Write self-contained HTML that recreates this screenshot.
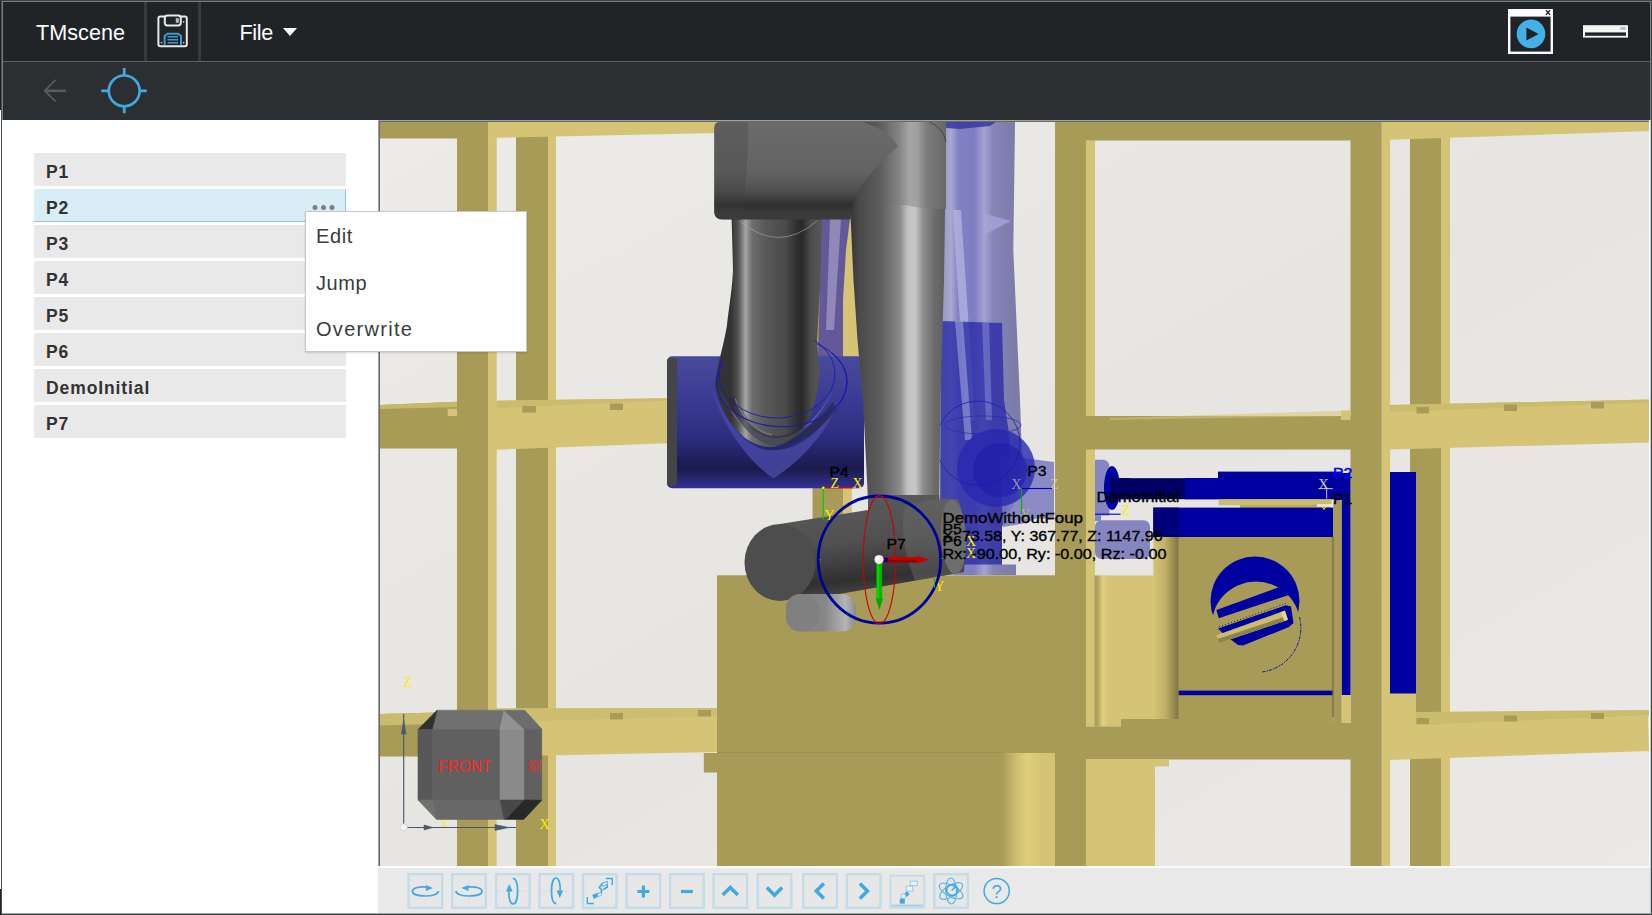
<!DOCTYPE html>
<html lang="en">
<head>
<meta charset="utf-8">
<title>TMscene</title>
<style>
html,body{margin:0;padding:0;}
body{width:1652px;height:915px;overflow:hidden;background:#fff;position:relative;font-family:"Liberation Sans","DejaVu Sans",sans-serif;}
.abs{position:absolute;}
#frameL{left:0;top:0;width:1px;height:915px;background:linear-gradient(#14202a 0,#14202a 110px,#fff 110px,#fff 889px,#1e2124 889px);}
#frameL1{left:1px;top:0;width:1px;height:915px;background:#4d5255;}
#frameL2{left:2px;top:1px;width:1px;height:119px;background:#7a7f80;}
#frameR{left:1649px;top:120px;width:2px;height:795px;background:linear-gradient(90deg,#fff 0,#fff 1px,#c9cbcc 1px);}
#frameR1{left:1651px;top:0;width:1px;height:915px;background:#3c4144;}
#frameR2{left:1650px;top:1px;width:1px;height:119px;background:#7a7f80;}
#frameB{left:1px;top:914px;width:1651px;height:1px;background:#3c4144;}
#hdr{left:3px;top:0;width:1647px;height:61px;background:#202427;}
#hdrTop0{left:0;top:0;width:1652px;height:1px;background:#3c4144;}
#hdrTop{left:2px;top:1px;width:1649px;height:1px;background:#7a7f80;}
#hdrSep{left:3px;top:61px;width:1647px;height:1px;background:#5b6062;}
#bar2{left:3px;top:62px;width:1647px;height:58px;background:#2b2f32;}
.vsep{top:2px;width:3px;height:59px;background:#363b3e;}
#title{left:36px;top:18.6px;color:#fff;font-size:21.6px;line-height:28px;letter-spacing:0.05px;}
#file{left:239.4px;top:18.6px;color:#fff;font-size:21.6px;line-height:28px;letter-spacing:-0.3px;}
#caret{left:282.6px;top:28px;width:0;height:0;border-left:7.6px solid transparent;border-right:7.6px solid transparent;border-top:8.2px solid #fff;}
#panel{left:2px;top:120px;width:376px;height:794px;background:#fff;}
.row{left:34px;width:312px;height:33px;background:#e9e9e9;color:#333;font-weight:bold;font-size:17.5px;line-height:39px;box-sizing:border-box;padding-left:12px;letter-spacing:0.9px;overflow:hidden;}
.row.sel{background:#d9edf7;border-bottom:1px solid #8fc5ea;border-right:1px solid #8fc5ea;}
#popup{left:305px;top:211px;width:222px;height:141px;background:#fff;border:1px solid #c8c8c8;box-sizing:border-box;box-shadow:0 1px 2px rgba(0,0,0,.15);}
.mi{left:10px;color:#373c3f;font-size:20px;line-height:26px;letter-spacing:0.6px;white-space:nowrap;}
#view{left:378px;top:120px;width:1271px;height:746px;}
#tb{left:378px;top:866px;width:1272px;height:48px;background:#e9e9e9;}
</style>
</head>
<body>
<div class="abs" id="panel"></div>
<div class="abs" id="frameL"></div><div class="abs" id="frameL1"></div><div class="abs" id="frameL2"></div>
<div class="abs" id="frameR"></div><div class="abs" id="frameR1"></div><div class="abs" id="frameR2"></div>
<div class="abs" id="frameB"></div>
<div class="abs" id="hdr"></div>
<div class="abs" id="hdrTop0"></div><div class="abs" id="hdrTop"></div>
<div class="abs" id="hdrSep"></div>
<div class="abs" id="bar2"></div>
<div class="abs vsep" style="left:144px"></div>
<div class="abs vsep" style="left:198px"></div>
<div class="abs" id="title">TMscene</div>
<div class="abs" id="file">File</div>
<div class="abs" id="caret"></div>


<!-- header icons -->
<svg class="abs" style="left:150px;top:8px" width="46" height="46" viewBox="150 8 46 46">
 <rect x="158.4" y="16.6" width="28.4" height="29.6" rx="2" fill="none" stroke="#e8e8e8" stroke-width="2"/>
 <rect x="164.8" y="15.6" width="16" height="9.8" rx="2.6" fill="#202427" stroke="#e8e8e8" stroke-width="2"/>
 <rect x="175.8" y="18.2" width="3" height="4.6" fill="#bdbdbd"/>
 <path d="M164.6 45 V36 L167.6 33.8 H178 L181 36 V45" fill="none" stroke="#3a9bd1" stroke-width="2"/>
 <path d="M167.6 36.8 H178 M167.6 39.8 H178 M167.6 42.8 H178" stroke="#3a9bd1" stroke-width="1.4"/>
 <circle cx="183.6" cy="21.8" r="0.9" fill="#ccc"/><circle cx="161.5" cy="42.6" r="0.9" fill="#bbb"/><circle cx="183.6" cy="42.6" r="0.9" fill="#bbb"/>
</svg>
<svg class="abs" style="left:30px;top:62px" width="130" height="58" viewBox="30 62 130 58">
 <path d="M65.8 90.8 H45.5" stroke="#585c5e" stroke-width="2.6" fill="none"/>
 <path d="M55.6 79.8 L44.6 90.8 L55.6 101.4" stroke="#585c5e" stroke-width="1.7" fill="none"/>
 <circle cx="124.2" cy="90.9" r="15.4" fill="none" stroke="#3fa9e0" stroke-width="2.7"/>
 <path d="M124.2 68 V76 M124.2 105.8 V113.2 M101.2 90.9 H109.2 M139.2 90.9 H146.8" stroke="#3fa9e0" stroke-width="2.8" fill="none"/>
</svg>
<svg class="abs" style="left:1500px;top:4px" width="140" height="56" viewBox="1500 4 140 56">
 <rect x="1508" y="9" width="45" height="45" fill="#fbfbfb"/>
 <rect x="1510.4" y="16.6" width="40.2" height="35" fill="#202427"/>
 <path d="M1546 10.3 L1550 14.7 M1550 10.3 L1546 14.7" stroke="#202427" stroke-width="1.3"/>
 <circle cx="1531" cy="33.9" r="14.3" fill="#45b0e5"/>
 <path d="M1526.4 27.4 L1538.6 34 L1526.4 40.4 Z" fill="#202427"/>
 <rect x="1583" y="25.2" width="45" height="12.4" fill="#f4f4f4"/>
 <rect x="1585" y="32.4" width="41" height="3.4" fill="#202427"/>
 <rect x="1620.4" y="27" width="5" height="2.8" fill="#bbb"/>
</svg>


<!-- SCENE -->
<svg class="abs" id="view" viewBox="378 120 1271 746">
<defs>
<linearGradient id="bgG" x1="0" y1="0" x2="1" y2="1"><stop offset="0" stop-color="#ecebe8"/><stop offset="0.5" stop-color="#e7e5e2"/><stop offset="1" stop-color="#ebe9e7"/></linearGradient>
<linearGradient id="cylG" x1="0" y1="0" x2="1" y2="0"><stop offset="0" stop-color="#d5c475"/><stop offset="0.45" stop-color="#c2b268"/><stop offset="1" stop-color="#7f7440"/></linearGradient>
<linearGradient id="pedR" x1="0" y1="0" x2="1" y2="0"><stop offset="0" stop-color="#a89b58"/><stop offset="0.08" stop-color="#ab9e5a"/><stop offset="0.3" stop-color="#cdbd70"/><stop offset="0.5" stop-color="#dfcf7c"/><stop offset="0.75" stop-color="#d5c475"/><stop offset="1" stop-color="#d5c475"/></linearGradient>
<linearGradient id="colH" x1="0" y1="0" x2="1" y2="0"><stop offset="0" stop-color="#a89b58"/><stop offset="0.25" stop-color="#b2a560"/><stop offset="0.62" stop-color="#e0d080"/><stop offset="1" stop-color="#d5c475"/></linearGradient>
<mask id="capM"><rect x="1200" y="540" width="120" height="150" fill="#fff"/><circle cx="1256" cy="626" r="44.5" fill="#000"/></mask>
<linearGradient id="gArm" gradientUnits="userSpaceOnUse" x1="944" y1="0" x2="1016" y2="0"><stop offset="0" stop-color="#9c9cc4"/><stop offset="0.1" stop-color="#a8a8d0"/><stop offset="0.2" stop-color="#8080c4"/><stop offset="0.42" stop-color="#7e7ec2"/><stop offset="0.56" stop-color="#a4a4d4"/><stop offset="0.68" stop-color="#8484b6"/><stop offset="1" stop-color="#7c7ca8"/></linearGradient>
<linearGradient id="gCyl" x1="0" y1="0" x2="0" y2="1"><stop offset="0" stop-color="#4a4a9c"/><stop offset="0.3" stop-color="#3c3c94"/><stop offset="0.62" stop-color="#2c2c80"/><stop offset="0.85" stop-color="#1a1a4c"/><stop offset="0.95" stop-color="#2a2a7a"/><stop offset="1" stop-color="#3030a0"/></linearGradient>
<linearGradient id="gBlk" gradientUnits="userSpaceOnUse" x1="0" y1="122" x2="0" y2="220"><stop offset="0" stop-color="#6b6b6b"/><stop offset="0.5" stop-color="#636363"/><stop offset="0.7" stop-color="#505050"/><stop offset="0.85" stop-color="#2f2f2f"/><stop offset="0.93" stop-color="#3c3c3c"/><stop offset="1" stop-color="#3a3a3a"/></linearGradient>
<linearGradient id="gV" gradientUnits="userSpaceOnUse" x1="850" y1="0" x2="946" y2="0"><stop offset="0" stop-color="#343434"/><stop offset="0.1" stop-color="#4a4a4a"/><stop offset="0.32" stop-color="#5e5e5e"/><stop offset="0.52" stop-color="#8a8a8a"/><stop offset="0.6" stop-color="#c0c0c0"/><stop offset="0.68" stop-color="#c8c8c8"/><stop offset="0.76" stop-color="#8e8e8e"/><stop offset="0.88" stop-color="#6c6c6c"/><stop offset="1" stop-color="#5c5c5c"/></linearGradient>
<linearGradient id="gVtop" gradientUnits="userSpaceOnUse" x1="850" y1="0" x2="946" y2="0"><stop offset="0" stop-color="#343434"/><stop offset="0.1" stop-color="#4a4a4a"/><stop offset="0.32" stop-color="#5e5e5e"/><stop offset="0.52" stop-color="#868686"/><stop offset="0.62" stop-color="#a6a6a6"/><stop offset="0.7" stop-color="#a0a0a0"/><stop offset="0.8" stop-color="#7c7c7c"/><stop offset="1" stop-color="#686868"/></linearGradient>
<linearGradient id="gL" gradientUnits="userSpaceOnUse" x1="731" y1="0" x2="822" y2="0"><stop offset="0" stop-color="#333"/><stop offset="0.08" stop-color="#545454"/><stop offset="0.16" stop-color="#a4a4a4"/><stop offset="0.23" stop-color="#6e6e6e"/><stop offset="0.38" stop-color="#585858"/><stop offset="0.6" stop-color="#4a4a4a"/><stop offset="0.72" stop-color="#303030"/><stop offset="0.78" stop-color="#282828"/><stop offset="0.88" stop-color="#4c4c4c"/><stop offset="1" stop-color="#585858"/></linearGradient>
<linearGradient id="gW" x1="0" y1="0" x2="0.18" y2="1"><stop offset="0" stop-color="#5c5c5c"/><stop offset="0.5" stop-color="#505050"/><stop offset="0.85" stop-color="#303030"/><stop offset="1" stop-color="#484848"/></linearGradient>
<linearGradient id="gS" x1="0" y1="0" x2="1" y2="0"><stop offset="0" stop-color="#808080"/><stop offset="0.55" stop-color="#868686"/><stop offset="0.85" stop-color="#b4b4b4"/><stop offset="1" stop-color="#8a8a8a"/></linearGradient>
<!--DEFS-->
</defs>
<rect x="378" y="120" width="1272" height="746" fill="url(#bgG)"/>
<g id="frameBack">
<!-- far posts -->
<rect x="516" y="122" width="32" height="744" fill="#a89b58"/><rect x="548" y="122" width="8" height="744" fill="#d5c475"/>
<rect x="1410" y="122" width="31.5" height="744" fill="#a89b58"/><rect x="1441.5" y="122" width="8.5" height="744" fill="#d5c475"/>
<rect x="812.5" y="122" width="30.5" height="454" fill="#a89b58"/><rect x="843" y="122" width="8.8" height="454" fill="#d5c475"/>
<rect x="843" y="225" width="20" height="132" fill="#d5c475"/>
<!-- top light beams -->
<polygon points="488,122 840,122 840,130.5 488,138" fill="#d5c475"/>
<polygon points="1382,122 1649,122 1649,131 1382,140" fill="#d5c475"/>
<!-- mid light beam left -->
<polygon points="496,400.7 668,398.3 668,443.2 496,449.8" fill="#d5c475"/>
<polygon points="496,400.7 668,398.3 668,400.6 496,408" fill="#cbbb6c"/>
<rect x="522.3" y="406" width="13.7" height="6.6" fill="#a89b58"/><rect x="610" y="403.5" width="13" height="6.5" fill="#a89b58"/>
<!-- mid light beam right -->
<polygon points="1390,405 1649,399.5 1649,442.5 1390,449.5" fill="#d5c475"/>
<polygon points="1390,405 1649,399.5 1649,402.5 1390,412" fill="#cbbb6c"/>
<rect x="1416.5" y="407" width="12.5" height="6.5" fill="#a89b58"/><rect x="1504" y="404.5" width="13" height="6.5" fill="#a89b58"/><rect x="1591" y="402" width="13" height="6.5" fill="#a89b58"/>
<!-- lower light beam left -->
<polygon points="496,708.5 717,708 717,752 496,756.5" fill="#d5c475"/>
<polygon points="496,708.5 717,708 717,716 496,722" fill="#cdbd70"/>
<rect x="610" y="713" width="13" height="6.5" fill="#a89b58"/><rect x="698" y="710" width="13" height="6.5" fill="#a89b58"/>
<!-- lower light beam right -->
<polygon points="1390,726 1648,715.6 1649,751 1390,760" fill="#d5c475"/><polygon points="1416,712 1649,710 1649,715.6 1416,725.2" fill="#cbbb6c"/>
<rect x="1416.5" y="718" width="12.5" height="6" fill="#a89b58"/><rect x="1504" y="715.5" width="13" height="6" fill="#a89b58"/><rect x="1591" y="713" width="13" height="6" fill="#a89b58"/>
<!-- left dark beams -->
<polygon points="380,122 488,122 488,138.4 380,138.4" fill="#a89b58"/>
<polygon points="380,405 457,401.8 457,448.6 380,448.6" fill="#a89b58"/>
<polygon points="380,405 457,401.8 457,407 380,409" fill="#c6b76a"/>
<rect x="447.7" y="408.8" width="9.3" height="7.2" fill="#d5c475"/>
<polygon points="380,714 457,712 457,756.5 380,756.5" fill="#a89b58"/>
<polygon points="380,714 457,712 457,723.5 380,725.5" fill="#cbbb6e"/>
<!-- front posts -->
<rect x="457" y="122" width="31" height="744" fill="#a89b58"/><rect x="488" y="138" width="8.7" height="728" fill="#d5c475"/>
<rect x="1055" y="122" width="31" height="744" fill="#a89b58"/><rect x="1086" y="140.5" width="9" height="440" fill="#d5c475"/>
<rect x="1350.5" y="122" width="31.3" height="744" fill="#a89b58"/><rect x="1381.8" y="122" width="8.3" height="744" fill="#d5c475"/>
<!-- right dark beams -->
<rect x="1086" y="122" width="265" height="18.5" fill="#a89b58"/>
<rect x="1086" y="416" width="265" height="33.5" fill="#a89b58"/>
<polygon points="1110,418 1350.5,410.5 1350.5,416 1110,420" fill="#d5c475" opacity="0.55"/>
<rect x="1341" y="410.5" width="9.5" height="9.5" fill="#d5c475"/>
</g>
<g id="ghost">
<!-- ghost upper arm -->
<polygon points="940,122 1015,122 1013.3,250 1020,400 1022,458 1016,500 1002,527 1002,564.4 1016,564.4 1016,575 940,575" fill="url(#gArm)"/>
<polygon points="943,122 996,122 990,126 960,129 946,128" fill="#3c3ca4" opacity="0.9"/><polygon points="953,210 961,210 975,420 966,420" fill="#b4b4e2" opacity="0.75"/>
<polygon points="983,213 1011,221 984,235" fill="#a4a4dc" opacity="0.8"/>
<polygon points="941,321 1002,323 1004,400 1010,440 1010,500 1002,527 1002,564.4 940,564.4" fill="#2c2ca8" opacity="0.8"/>
<polygon points="955,321 963,321 972,440 965,440" fill="#a0a0dc" opacity="0.6"/><polygon points="982,321 989,321 992,420 986,420" fill="#8c8cd4" opacity="0.5"/>
<!-- ghost thin arm between gray arms -->
<polygon points="822,219 850,219 846,250 843,300 843,357 818,357" fill="#64589a"/>
<polygon points="830,219 841,219 834,330 826,330" fill="#9088b8"/>
<!-- P3 blob -->
<polygon points="1000,455 1054,462 1054,518.5 1036,518.5 1026,523 1003,527" fill="#7a7ac0" opacity="0.85"/>
<circle cx="996" cy="468" r="39" fill="#2828b0" opacity="0.8"/>
<circle cx="978" cy="443" r="42" fill="none" stroke="#1c1cb0" stroke-width="0.8"/>
<circle cx="1000" cy="470" r="27" fill="#1818a8" opacity="0.5"/>
<ellipse cx="983" cy="425" rx="38" ry="9" fill="none" stroke="#2a2ab0" stroke-width="0.7"/>
<!-- ghost pieces right of post -->
<rect x="1095" y="520.2" width="55" height="38.8" rx="6.5" fill="#8585c0"/>
<path d="M1095,459.8 H1104 Q1109.5,461 1109.5,467 V515.6 H1095 Z" fill="#8686c0"/><rect x="1095" y="515" width="6" height="6" fill="#8686c0"/>
<!-- ghost shoulder cylinder -->
<rect x="667" y="356.3" width="197" height="132" rx="5" fill="url(#gCyl)"/>
<rect x="667" y="358" width="10" height="128" rx="4" fill="#454548"/>
</g>
<g id="rightObjs">
<!-- blue back panels -->
<rect x="1390" y="472" width="26" height="222" fill="#0000a0"/>
<rect x="1390" y="693.5" width="26" height="34" fill="#d5c475"/>
<rect x="1341.5" y="473" width="9" height="222" fill="#0000a0"/>
<rect x="1341.5" y="695" width="9" height="31" fill="#d5c475"/>
<!-- fork bar -->
<rect x="1110" y="478.2" width="76" height="21" fill="#000064"/>
<rect x="1185" y="478" width="157" height="21.4" fill="#0000a0"/>
<rect x="1218" y="471.6" width="124" height="7" fill="#0000a0"/>
<ellipse cx="1112" cy="488" rx="8" ry="22" fill="#0000a0"/>
<rect x="1110" y="478.2" width="20" height="21" fill="#000064"/>
<rect x="1218.5" y="499.4" width="113" height="6" fill="#cdbc6c"/>
<rect x="1240" y="505" width="91" height="3" fill="#b9aa60"/>
<!-- light pedestal side -->
<rect x="1094.6" y="575.5" width="60" height="151" fill="#d5c475"/>
<rect x="1086" y="575.5" width="9" height="151" fill="#d5c475"/>
<rect x="1094.6" y="575.5" width="13.4" height="151" fill="url(#colH)"/>
<!-- foup box -->
<rect x="1153.3" y="507.6" width="180" height="30" fill="#0000a0"/>
<rect x="1153.3" y="507.6" width="25.5" height="30" fill="#00007a"/>
<rect x="1178.7" y="537" width="154.8" height="187" fill="#a89b58"/>
<rect x="1153.3" y="537" width="25.5" height="182" fill="url(#cylG)"/>
<rect x="1178.7" y="690.6" width="154.8" height="4.6" fill="#0000a0"/>
<rect x="1333.3" y="501" width="8.3" height="226" fill="#a89b58"/>
<rect x="1332.3" y="537" width="1.4" height="180" fill="#7a7040"/>
<!-- logo -->
<circle cx="1255" cy="601" r="44.5" fill="#0000a0" mask="url(#capM)"/>
<path d="M1299.5,617 A44.5,44.5 0 0 1 1262,672" fill="none" stroke="#0000a0" stroke-width="0.9" stroke-dasharray="3 0.8 1.5 1.2"/>
<polygon points="1216.4,610 1281.5,586.3 1289,584 1289.5,594.7 1218.7,618.2" fill="#0000a0"/>
<polygon points="1218,628.4 1286,605.2 1291,606.5 1293.5,623 1289,627 1243,645.5 1238,645 1224,634.5" fill="#0000a0"/>
<polygon points="1216.4,635.3 1282.2,611.6 1287.6,620 1219.5,643" fill="#cdbc6c"/>
<polygon points="1217.6,639 1285.6,616.4 1287.6,620 1219.5,643" fill="#8f8448"/>
<polygon points="1281,612 1285,610.6 1288,619.6 1284.2,621" fill="#e6d88a"/>
<path d="M1219,627 L1286,603.5" stroke="#0000a0" stroke-width="0.9" stroke-dasharray="1 2.2" fill="none"/>
<!-- dark beam bottom right portion -->
<rect x="1086" y="726.5" width="265" height="33" fill="#a89b58"/>
<polygon points="1121,719 1265,719 1265,723 1351,723 1351,727 1121,727" fill="#a89b58"/>
<rect x="1086" y="759.5" width="69" height="107" fill="#d5c475"/>
<rect x="1155" y="759.5" width="14" height="7" fill="#d5c475"/>
</g>
<g id="pedestal">
<rect x="717" y="575.3" width="338" height="291" fill="#a89b58"/>
<rect x="703.8" y="753" width="14" height="19.5" fill="#a89b58"/>
<rect x="717" y="752" width="285" height="1" fill="#9a8e50"/>
<rect x="999" y="753" width="56" height="113" fill="url(#pedR)"/>
</g>
<g id="robot">
<ellipse cx="782" cy="381.7" rx="65" ry="45" fill="none" stroke="#1a1ab4" stroke-width="1"/>
<!-- lower-left arm -->
<path d="M731.5,215 L822.4,215 L820.6,280 L817,340 L819.5,372 C817,420 795,447 770,447 C745,447 722,420 715,385 C718,360 724,345 727,325 C730,300 732,290 733,270 Z" fill="url(#gL)"/>
<!-- ghost collar over arm -->
<path d="M708,377 C722,430 750,462 773.5,478.5 C800,462 830,430 841,396 C820,440 790,452 768,450 C745,447 722,420 708,377 Z" fill="#4a4aa8" opacity="0.8"/>
<path d="M714,380 C730,418 752,440 775,446 C800,440 822,415 832,392 C812,428 790,440 772,438 C748,434 728,412 714,380 Z" fill="#8e8ec8" opacity="0.45"/>
<path d="M728,400 C740,430 760,445 778,446 C800,445 822,428 837,410 L833,402 C820,420 800,434 778,436 C760,435 745,420 735,396 Z" fill="#26262e" opacity="0.5"/>
<path d="M735,398 C742,418 756,432 772,435" fill="none" stroke="#b4b4d0" stroke-width="1.6" opacity="0.4"/>
<path d="M723.1,362.7 A65,45 0 1 0 831.8,352.8" fill="none" stroke="#1a1ab4" stroke-width="1.1"/>
<path d="M722.5,359.0 A58,44 0 1 0 814.3,340.3" fill="none" stroke="#1a1ab4" stroke-width="0.9"/>
<!-- vertical arm -->
<path d="M850,122 L946,122 L946,146 L944,280 L940.5,400 L939.3,500 L868,500 L863,401 L857.5,340 L853.5,280 L850.5,215 Z" fill="url(#gV)"/>
<path d="M850,122 L946,122 L946,209 L927,208.8 L904,205 L850,205 Z" fill="url(#gVtop)"/>
<path d="M929.4,122 Q944,128 946,142" fill="none" stroke="#3a3a3a" stroke-width="0.8"/>
<!-- upper block -->
<path d="M719,122 L862.7,122 Q888,130 898,146.3 Q872,168 858.4,191 Q851,205 850.5,219.6 L722,219.6 Q714.2,219 714.2,212 L714.2,129 Q714.2,122 719,122 Z" fill="url(#gBlk)"/>
<path d="M719,122 L748,122 Q749,170 741,219.6 L722,219.6 Q714.2,219 714.2,212 L714.2,129 Q714.2,122 719,122 Z" fill="#3c3c3c" opacity="0.28"/>
<path d="M740,221 Q778,254 817,221" fill="none" stroke="#b0b0b0" stroke-width="0.7" opacity="0.8"/>
<!-- wrist -->
<path d="M868,495 L939.3,495 L939.3,500 L958,499.5 Q967,520 964,572 L800,600.9 L780,524 L868,510 Z" fill="url(#gW)"/>
<path d="M905,504 L939.3,498 L958,499.5 Q967,520 964,572 L915,580.5 Q898,540 905,504 Z" fill="#6a6a6a" opacity="0.45"/>
<ellipse cx="953.5" cy="537" rx="12.5" ry="37.5" fill="#6e6e6e" transform="rotate(-3 953.5 537)"/>
<path d="M868,496 Q880,520 905,508 Q925,500 939,497 L939,500 L868,500 Z" fill="#555" opacity="0.5"/>
<ellipse cx="780" cy="562.5" rx="35.5" ry="38.5" fill="#4d4d4d"/>
<!-- small cylinder -->
<rect x="786" y="594" width="70" height="37.5" rx="14" fill="url(#gS)"/>
<ellipse cx="803" cy="612.7" rx="17" ry="18.7" fill="#808080"/>
</g>
<g id="overlay" font-family="'Liberation Sans','DejaVu Sans',sans-serif">
<!-- P4 axes -->
<path d="M823.3,487.7 H853.8" stroke="#e00000" stroke-width="1.2"/>
<path d="M823.3,487.7 V519.2" stroke="#00d000" stroke-width="1.2"/>
<circle cx="823.3" cy="487.7" r="1.3" fill="#ffff00"/>
<g font-family="'Liberation Serif','DejaVu Serif',serif" font-size="14" fill="#ffee00">
<text x="830.5" y="487.5">Z</text><text x="852.5" y="487.5">X</text><text x="824.5" y="519.5">Y</text>
<text x="1121.5" y="515">Z</text>
<text x="966" y="546">X</text><text x="966" y="557.5">X</text>
<text x="934.5" y="590.5">Y</text>
<text x="403.5" y="687">Z</text><text x="539.5" y="828.5">X</text><text x="440" y="826.5" font-size="12">Y</text>
</g>
<g font-family="'Liberation Serif','DejaVu Serif',serif" font-size="14" fill="#b0a8c8" opacity="0.85">
<text x="1011.5" y="489">X</text><text x="1050" y="489" fill="#d8d090">Z</text><text x="1020.5" y="518.5" fill="#c8c060">Y</text>
</g>
<!-- P3 axes -->
<path d="M1021.5,488.5 H1052" stroke="#0000c8" stroke-width="1.1"/>
<path d="M1021.5,488.5 V514" stroke="#00b000" stroke-width="1.1"/>
<path d="M1095,514.2 H1120.5" stroke="#0000c8" stroke-width="1.1"/>
<!-- gizmo -->
<ellipse cx="879.4" cy="559.6" rx="61.2" ry="63.6" fill="none" stroke="#00009a" stroke-width="2.8"/>
<ellipse cx="879.4" cy="559.6" rx="16.2" ry="64" fill="none" stroke="#cc0000" stroke-width="1.1"/>
<rect x="883" y="557" width="36" height="5.4" fill="#c80000"/>
<rect x="883" y="559.8" width="36" height="2.6" fill="#900000"/>
<polygon points="917.5,556 929.5,559.7 917.5,563.6" fill="#c80000"/>
<rect x="884" y="557.8" width="4" height="4" fill="#0000a0"/>
<rect x="876.7" y="563" width="5.4" height="37" fill="#00b400"/>
<rect x="876.7" y="563" width="2.4" height="37" fill="#00d800"/>
<polygon points="875.8,598.5 883,598.5 879.4,610" fill="#00a800"/>
<circle cx="879" cy="559.5" r="4.6" fill="#e8e8e8"/>
<circle cx="877.8" cy="558.3" r="2.2" fill="#ffffff"/>
<path d="M941,558.5 h3 M819.5,559.8 h2" stroke="#00c000" stroke-width="1"/>
<path d="M934.5,578 V588" stroke="#00c000" stroke-width="1"/>
<!-- labels -->
<g font-size="14.4" fill="#000" stroke="#000" stroke-width="0.35">
<text transform="translate(829.5,477) scale(1.095,1)">P4</text>
<text transform="translate(886.5,548.7) scale(1.095,1)">P7</text>
<text transform="translate(1027.3,476.2) scale(1.095,1)">P3</text>
<text transform="translate(1096.5,502.4) scale(1.152,1)">DemoInitial</text>
<text transform="translate(942.5,523.3) scale(1.171,1)">DemoWithoutFoup</text>
<text transform="translate(942.5,533.5) scale(1.095,1)">P5</text>
<text transform="translate(942.5,546) scale(1.095,1)">P6</text>
<text transform="translate(942.5,541.4) scale(1.112,1)">X: 73.58, Y: 367.77, Z: 1147.96</text>
<text transform="translate(942.5,559.3) scale(1.125,1)">Rx: -90.00, Ry: -0.00, Rz: -0.00</text>
<text transform="translate(1333,503.5) scale(1.095,1)">P1</text>
</g>
<text transform="translate(1333,477.8) scale(1.095,1)" font-size="14.4" fill="#0000ff" stroke="#0000ff" stroke-width="0.5">P2</text>
<g font-family="'Liberation Serif','DejaVu Serif',serif" font-size="14.5" fill="#d0d0d0"><text x="1318.3" y="489.4">X</text></g>
<path d="M1318.7,488.6 H1332.8 M1326.7,489 V498.6" stroke="#d8d8d8" stroke-width="0.9"/><rect x="1317" y="504.2" width="15.8" height="2.6" fill="#ecebe6"/><path d="M1321.5,505 L1324,509.5 M1327,505 L1324,509.5" stroke="#ffee00" stroke-width="1"/>
</g>
<g id="navcube" font-family="'Liberation Sans','DejaVu Sans',sans-serif">
<polygon points="437.1,710.2 504,710.2 500,729.5 432.2,729.5" fill="#707070" stroke="#707070" stroke-width="0.6"/>
<polygon points="418,729.5 437.1,710.2 432.2,729.5" fill="#303030" stroke="#303030" stroke-width="0.6"/>
<rect x="418" y="729.5" width="14.4" height="70.5" fill="#585858" stroke="#585858" stroke-width="0.6"/>
<rect x="432.2" y="729.5" width="68" height="70.5" fill="#606060" stroke="#606060" stroke-width="0.6"/>
<polygon points="418,800 432.2,800 436.5,819.4" fill="#707070" stroke="#707070" stroke-width="0.6"/>
<polygon points="432.2,800 500,800 504,819.4 436.5,819.4" fill="#686868" stroke="#686868" stroke-width="0.6"/>
<rect x="500" y="729.5" width="24.4" height="70.5" fill="#8a8a8a" stroke="#8a8a8a" stroke-width="0.6"/>
<polygon points="504,710.2 524.3,729.5 500,729.5" fill="#929292" stroke="#929292" stroke-width="0.6"/>
<polygon points="504,710.2 524.7,710.2 541.8,729 524.3,729.5" fill="#6c6c6c" stroke="#6c6c6c" stroke-width="0.6"/>
<rect x="524.3" y="729.3" width="17.5" height="71" fill="#606060" stroke="#606060" stroke-width="0.6"/>
<polygon points="500,800 524.3,800 506,819.4 504,819.4" fill="#484848" stroke="#484848" stroke-width="0.6"/>
<polygon points="524.3,800 541.8,800.3 523.7,819.4 506,819.4" fill="#282828" stroke="#282828" stroke-width="0.6"/>
<text transform="translate(438.2,772.2) scale(0.905,1)" font-size="17" fill="#ff2424">FRONT</text>
<text transform="translate(528.8,772.2) scale(0.235,1)" font-size="17" fill="#ff2424">RIGHT</text>
<path d="M403.7,714 V827 M403.7,827.5 H516" stroke="#465668" stroke-width="1.1" fill="none"/>
<polygon points="403.7,720 401.3,734 406.1,734" fill="#4a5a6c" stroke="#4a5a6c" stroke-width="0.6"/>
<polygon points="433,827.5 424,825 424,830" fill="#4a5a6c" stroke="#4a5a6c" stroke-width="0.6"/>
<polygon points="509,827.5 495,824.6 495,830.4" fill="#4a5a6c" stroke="#4a5a6c" stroke-width="0.6"/>
<circle cx="403.7" cy="827.3" r="3.6" fill="#f4f4f4" stroke="#c8c8c8" stroke-width="0.6"/>
</g>
<g id="vborder"><rect x="378" y="120" width="1271" height="1" fill="#a0a0a0"/><rect x="378" y="121" width="1271" height="1" fill="#696969"/><rect x="378" y="120" width="1" height="746" fill="#a0a0a0"/><rect x="379" y="121" width="1" height="745" fill="#696969"/></g>
</svg>

<div class="abs" id="tb"></div>
<div class="abs" style="left:378px;top:866px;width:1272px;height:2px;background:#fbfbfb"></div>
<div class="abs" style="left:2px;top:913px;width:1648px;height:1px;background:#a2a5a6"></div>
<svg class="abs" style="left:378px;top:866px" width="1272" height="49" viewBox="378 866 1272 49" font-family="'Liberation Sans',sans-serif">
<g transform="translate(407.4,873)"><rect x="1.2" y="1.2" width="33.6" height="33.6" fill="#e7e7e7" stroke="#c2dcea" stroke-width="2.4"/><path d="M18,7 V13 M18,23 V31" stroke="#d4d4d4" stroke-width="1" stroke-dasharray="1.5 1.5"/><path d="M21,14.2 C10,13 5,15.5 5,18.3 C5,21.4 11,23 18,23 C25,23 31,21.3 31,18" fill="none" stroke="#3fa9e0" stroke-width="1.7"/><polygon points="18.5,12 25.5,15 18.5,18" fill="#3fa9e0"/></g>
<g transform="translate(451,873)"><rect x="1.2" y="1.2" width="33.6" height="33.6" fill="#e7e7e7" stroke="#c2dcea" stroke-width="2.4"/><path d="M18,7 V13 M18,23 V31" stroke="#d4d4d4" stroke-width="1" stroke-dasharray="1.5 1.5"/><path d="M15,14.2 C26,13 31,15.5 31,18.3 C31,21.4 25,23 18,23 C11,23 5,21.3 5,18" fill="none" stroke="#3fa9e0" stroke-width="1.7"/><polygon points="17.5,12 10.5,15 17.5,18" fill="#3fa9e0"/></g>
<g transform="translate(494.8,873)"><rect x="1.2" y="1.2" width="33.6" height="33.6" fill="#e7e7e7" stroke="#c2dcea" stroke-width="2.4"/><path d="M5,18 H12 M24,18 H31" stroke="#d4d4d4" stroke-width="1" stroke-dasharray="1.5 1.5"/><path d="M14.2,17 C13.5,25 15.5,31 18.3,31 C21.2,31 22.8,25 22.8,18 C22.8,11 21.5,5.5 18,5.3" fill="none" stroke="#3fa9e0" stroke-width="1.7"/><polygon points="11.3,18.5 14.5,11 17.8,18.5" fill="#3fa9e0"/></g>
<g transform="translate(538.3,873)"><rect x="1.2" y="1.2" width="33.6" height="33.6" fill="#e7e7e7" stroke="#c2dcea" stroke-width="2.4"/><path d="M5,18 H12 M24,18 H31" stroke="#d4d4d4" stroke-width="1" stroke-dasharray="1.5 1.5"/><path d="M21.8,19 C22.5,11 20.5,5 17.7,5 C14.8,5 13.2,11 13.2,18 C13.2,25 14.5,30.5 18,30.7" fill="none" stroke="#3fa9e0" stroke-width="1.7"/><polygon points="18.3,17.5 21.5,25 24.8,17.5" fill="#3fa9e0"/></g>
<g transform="translate(581.8,873)"><rect x="1.2" y="1.2" width="33.6" height="33.6" fill="#e7e7e7" stroke="#c2dcea" stroke-width="2.4"/><path d="M24,5.5 H30.5 V12 M5.5,24 V30.5 H12" fill="none" stroke="#3fa9e0" stroke-width="1.4"/><path d="M12,24.5 L16,20.5 L19,21 L20,17 L17.5,14.5 L20.5,10.5 L25,9.5 L25.5,14 L21.5,16.5" fill="none" stroke="#3fa9e0" stroke-width="1.6"/><polygon points="10.5,22 15,20 16.5,23.5 12,26" fill="#3fa9e0"/><polygon points="20,10.5 25.5,8.5 25.5,11 21,13.5" fill="#f4f4f4" stroke="#3fa9e0" stroke-width="0.8"/><polygon points="15.5,21 19,19.5 20,22 16.5,23.5" fill="#f4f4f4" stroke="#3fa9e0" stroke-width="0.6"/></g>
<g transform="translate(625.4,873)"><rect x="1.2" y="1.2" width="33.6" height="33.6" fill="#e7e7e7" stroke="#c2dcea" stroke-width="2.4"/><path d="M18,12.5 V24.5 M12,18.5 H24" stroke="#3fa9e0" stroke-width="3.2"/></g>
<g transform="translate(668.9,873)"><rect x="1.2" y="1.2" width="33.6" height="33.6" fill="#e7e7e7" stroke="#c2dcea" stroke-width="2.4"/><path d="M12,18.5 H24" stroke="#3fa9e0" stroke-width="3.2"/></g>
<g transform="translate(712.3,873)"><rect x="1.2" y="1.2" width="33.6" height="33.6" fill="#e7e7e7" stroke="#c2dcea" stroke-width="2.4"/><path d="M10.4,22 L18,14.4 L25.6,22" fill="none" stroke="#3fa9e0" stroke-width="3.5"/></g>
<g transform="translate(756.5,873)"><rect x="1.2" y="1.2" width="33.6" height="33.6" fill="#e7e7e7" stroke="#c2dcea" stroke-width="2.4"/><path d="M10.4,14.6 L18,22.2 L25.6,14.6" fill="none" stroke="#3fa9e0" stroke-width="3.5"/></g>
<g transform="translate(802.1,873)"><rect x="1.2" y="1.2" width="33.6" height="33.6" fill="#e7e7e7" stroke="#c2dcea" stroke-width="2.4"/><path d="M21.8,10.4 L14.2,18 L21.8,25.6" fill="none" stroke="#3fa9e0" stroke-width="3.5"/></g>
<g transform="translate(845.7,873)"><rect x="1.2" y="1.2" width="33.6" height="33.6" fill="#e7e7e7" stroke="#c2dcea" stroke-width="2.4"/><path d="M14.2,10.4 L21.8,18 L14.2,25.6" fill="none" stroke="#3fa9e0" stroke-width="3.5"/></g>
<g transform="translate(889.3,874.6)"><rect x="1" y="1" width="34" height="32" fill="#e7e7e7" stroke="#c2dcea" stroke-width="2"/><rect x="2.4" y="30" width="31.2" height="1.8" fill="#9fcdea"/><path d="M13,27 L13.5,21 L17,19.5 L19,15 L22,13.5 L22,9.5" fill="none" stroke="#8ec6e8" stroke-width="1.6"/><rect x="10.5" y="24" width="5" height="5" fill="#3fa9e0"/><rect x="15.5" y="17.5" width="4" height="4" fill="#3fa9e0" transform="rotate(45 17.5 19.5)"/><rect x="17" y="11.5" width="6.5" height="5" fill="#f2f2f2" stroke="#8ec6e8" stroke-width="0.9"/><rect x="21" y="6.5" width="7" height="4.5" fill="#f2f2f2" stroke="#8ec6e8" stroke-width="0.9"/><rect x="12" y="19.5" width="4" height="4" fill="#f2f2f2" stroke="#8ec6e8" stroke-width="0.8"/></g>
<g transform="translate(933.1,873)"><rect x="1.2" y="1.2" width="33.6" height="33.6" fill="#e7e7e7" stroke="#c2dcea" stroke-width="2.4"/><g fill="none" stroke="#63b6e4" stroke-width="1.2"><ellipse cx="18" cy="18" rx="13" ry="5.5" transform="rotate(28 18 18)"/><ellipse cx="18" cy="18" rx="13" ry="5.5" transform="rotate(-32 18 18)"/><ellipse cx="18" cy="18" rx="13" ry="5.5" transform="rotate(88 18 18)"/><circle cx="19" cy="17" r="5.5" stroke-width="1.6" stroke="#3fa9e0"/></g><path d="M18.5,17.5 l4,-4" stroke="#3fa9e0" stroke-width="1.4"/></g>
<circle cx="996.7" cy="891" r="12.6" fill="none" stroke="#3fa9e0" stroke-width="1.5"/><text x="996.7" y="897.6" text-anchor="middle" font-size="18.5" fill="#3fa9e0">?</text>
</svg>

<!-- LIST -->
<div class="abs row" style="top:153px">P1</div>
<div class="abs row sel" style="top:189px">P2</div>
<div class="abs row" style="top:225px">P3</div>
<div class="abs row" style="top:261px">P4</div>
<div class="abs row" style="top:297px">P5</div>
<div class="abs row" style="top:333px">P6</div>
<div class="abs row" style="top:369px">DemoInitial</div>
<div class="abs row" style="top:405px">P7</div>
<svg class="abs" style="left:308px;top:200px" width="32" height="11" viewBox="308 200 32 11">
 <circle cx="315" cy="207.6" r="2.5" fill="#7b7f82"/><circle cx="323.5" cy="207.6" r="2.5" fill="#7b7f82"/><circle cx="332" cy="207.6" r="2.5" fill="#7b7f82"/>
</svg>
<div class="abs" id="popup">
<div class="abs mi" style="top:11px">Edit</div>
<div class="abs mi" style="top:58px">Jump</div>
<div class="abs mi" style="top:104px;letter-spacing:1.3px">Overwrite</div>
</div>
</body>
</html>
